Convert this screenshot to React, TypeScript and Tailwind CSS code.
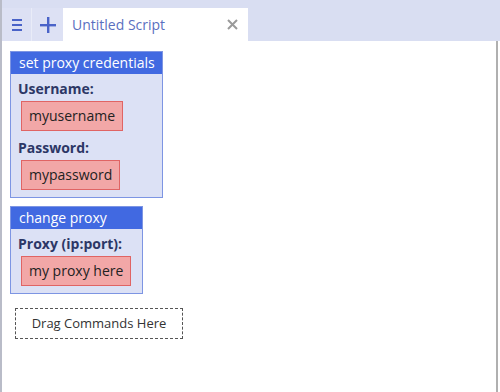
import React from "react";

function Card({ title, fields, width }: { title: string; fields: { label: string; value: string }[]; width?: string }) {
  return (
    <div className={"inline-flex flex-col self-start border border-[#7d95e3] bg-[#dce1f5] " + (width ?? "")}>
      <div className="bg-[#4169e1] pl-[8px] pr-[7px] h-[22px] leading-[22px] text-white text-[14px]">{title}</div>
      <div className="flex flex-col px-[7px] pb-[7px]">
        {fields.map((f, i) => (
          <div key={f.label} className="flex flex-col">
            <div className={(i === 0 ? "mt-[6px]" : "mt-[8px]") + " h-[18px] leading-[18px] font-bold text-[14px] text-[#2c3766]"}>{f.label}</div>
            <div className="self-start ml-[3px] mt-[3px] h-[30px] leading-[28px] px-[7px] border border-[#e06464] bg-[#f2a7a7] text-[14px] text-[#222]">
              {f.value}
            </div>
          </div>
        ))}
      </div>
    </div>
  );
}

export default function App() {
  return (
    <div className="w-[500px] h-[392px] flex flex-col bg-[#d9def2] overflow-hidden" style={{ fontFamily: '"Open Sans", "Noto Sans", sans-serif' }}>
      <div className="h-[8px] border-l-2 border-[#b9bcc8]"></div>
      <div className="flex h-[33px] border-l-2 border-[#b9bcc8]">
        <div className="w-[30px] bg-[#dde1f4] flex items-center justify-center border-r border-[#e9ecf8]">
          <svg width="10" height="12" viewBox="0 0 10 12">
            <rect x="0" y="0" width="10" height="2" fill="#4a63c8" />
            <rect x="0" y="5" width="10" height="2" fill="#4a63c8" />
            <rect x="0" y="10" width="10" height="2" fill="#4a63c8" />
          </svg>
        </div>
        <div className="w-[31px] bg-[#dde1f4] flex items-center justify-center">
          <svg width="16" height="16" viewBox="0 0 16 16">
            <rect x="7" y="0" width="2.4" height="16" fill="#4a63c8" />
            <rect x="0" y="7" width="16" height="2.4" fill="#4a63c8" />
          </svg>
        </div>
        <div className="w-[185px] bg-white flex items-center justify-between pl-[9px] pr-[10px]">
          <span className="text-[14px] text-[#5a6fc0]">Untitled Script</span>
          <svg width="11" height="11" viewBox="0 0 11 11">
            <path d="M1 1 L10 10 M10 1 L1 10" stroke="#9a9a9a" strokeWidth="2" />
          </svg>
        </div>
      </div>
      <div className="flex-1 bg-white border-l-2 border-[#b9bcc8] flex">
        <div className="flex-1 flex flex-col pl-[8px] pt-[10px]">
          <Card title="set proxy credentials" fields={[{ label: "Username:", value: "myusername" }, { label: "Password:", value: "mypassword" }]} />
          <div className="h-[8px]"></div>
          <Card title="change proxy" width="w-[133px]" fields={[{ label: "Proxy (ip:port):", value: "my proxy here" }]} />
          <div className="self-start mt-[14px] ml-[5px] w-[168px] h-[31px] border border-dashed border-[#555] flex items-center justify-center text-[13px] text-[#333]">
            Drag Commands Here
          </div>
        </div>
        <div className="w-[2px] mr-[2px] bg-[#b0b0b0]"></div>
      </div>
    </div>
  );
}
